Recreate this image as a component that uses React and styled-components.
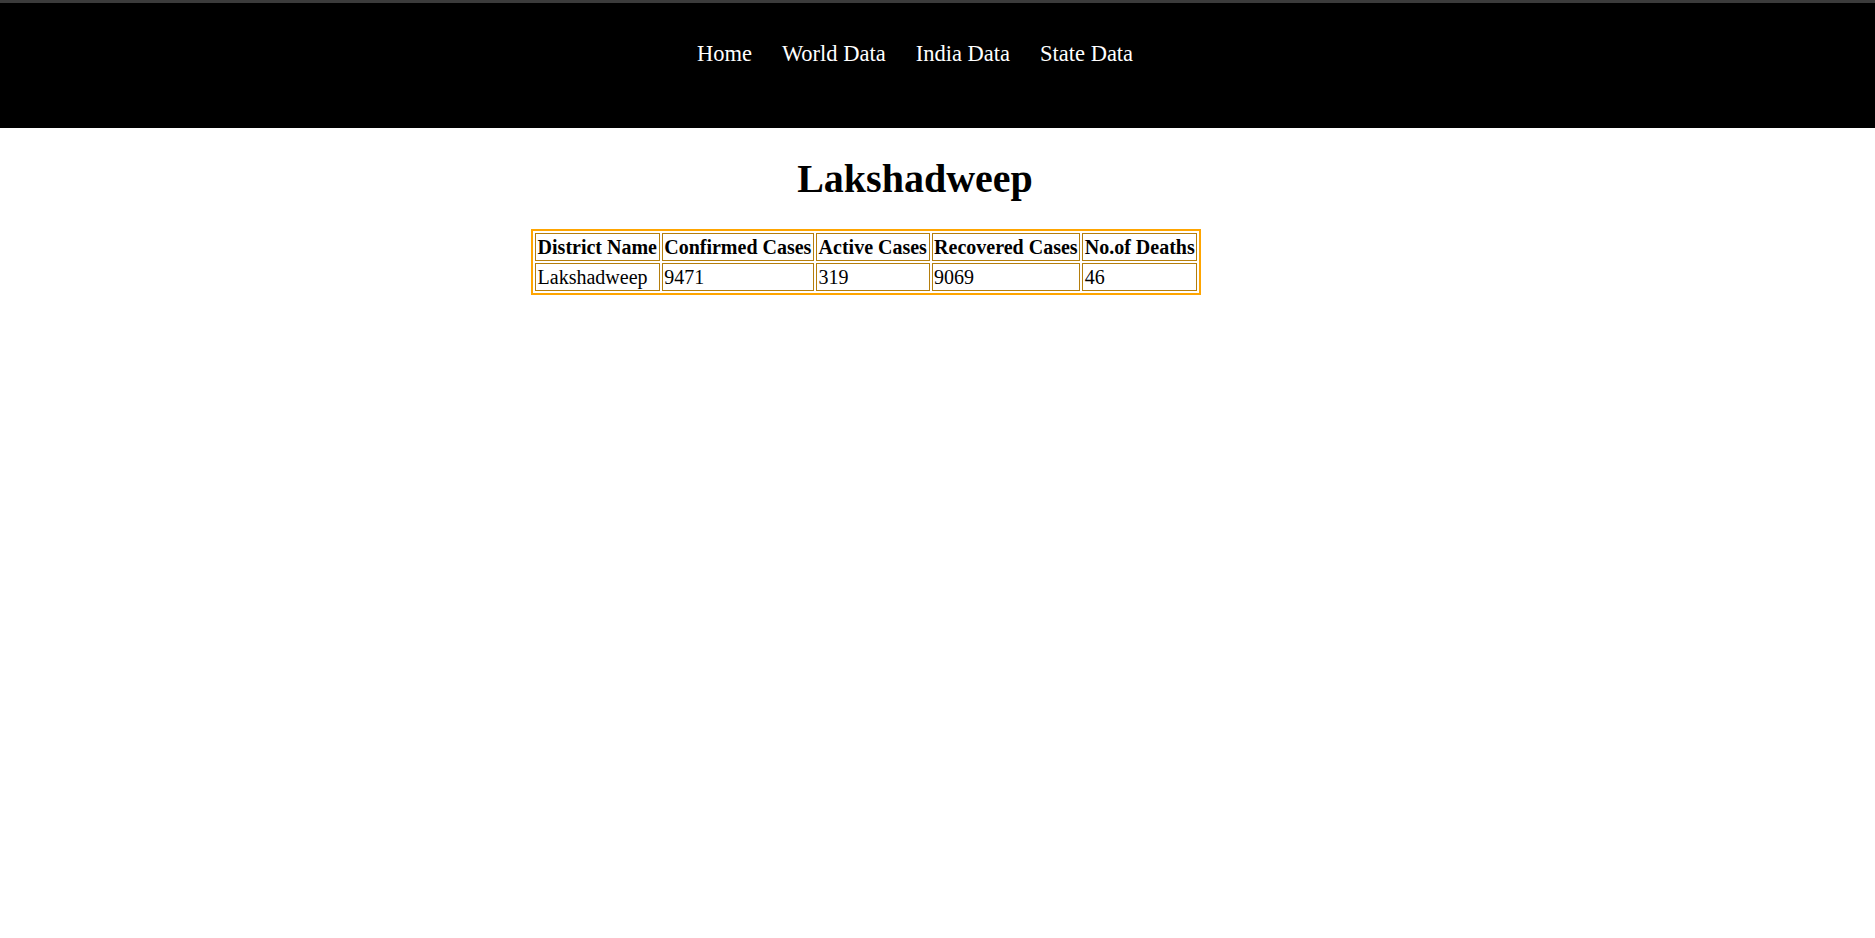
import React from "react"
import styled, { createGlobalStyle } from "styled-components"

const GlobalStyle = createGlobalStyle`
    body {
        margin: 0;
        background: #fff;
        font-family: "Liberation Serif", "Times New Roman", serif;
        color: #000;
    }
`

const districts = [
    { name: 'Lakshadweep', confirmed: 9471, active: 319, recovered: 9069, deaths: 46 },
]

const App = () => {
    return (
        <>
            <GlobalStyle />
            <NavBar>
                <NavList>
                    <NavLink href="#">Home</NavLink>
                    <NavLink href="#">World Data</NavLink>
                    <NavLink href="#">India Data</NavLink>
                    <NavLink href="#">State Data</NavLink>
                </NavList>
            </NavBar>
            <Title>Lakshadweep</Title>
            <Table>
                <thead>
                    <tr>
                        <Th>District Name</Th>
                        <Th>Confirmed Cases</Th>
                        <Th>Active Cases</Th>
                        <Th>Recovered Cases</Th>
                        <Th>No.of Deaths</Th>
                    </tr>
                </thead>
                <tbody>
                    {districts.map(d => (
                        <tr key={d.name}>
                            <Td>{d.name}</Td>
                            <Td>{d.confirmed}</Td>
                            <Td>{d.active}</Td>
                            <Td>{d.recovered}</Td>
                            <Td>{d.deaths}</Td>
                        </tr>
                    ))}
                </tbody>
            </Table>
        </>
    )
}

export default App

const NavBar = styled.nav`
    height: 125px;
    background: #000;
    border-top: 3px solid #3b3b3b;
`

const NavList = styled.div`
    display: flex;
    justify-content: center;
    padding: 38px 45px 0 0;
`

const NavLink = styled.a`
    color: #fff;
    text-decoration: none;
    font-size: 22.5px;
    padding: 0 15px;
`

const Title = styled.h1`
    margin: 27px 45px 27px 0;
    text-align: center;
    font-size: 40px;
    font-weight: bold;
`

const Table = styled.table`
    margin-left: 531px;
    border: 2.5px solid #ffa500;
    border-spacing: 2.5px;
    font-size: 20px;
`

const Th = styled.th`
    border: 1px solid #b57e0c;
    padding: 1.5px 1.6px;
    text-align: left;
    font-weight: bold;
`

const Td = styled.td`
    border: 1px solid #b57e0c;
    padding: 1.5px 1.6px;
`
